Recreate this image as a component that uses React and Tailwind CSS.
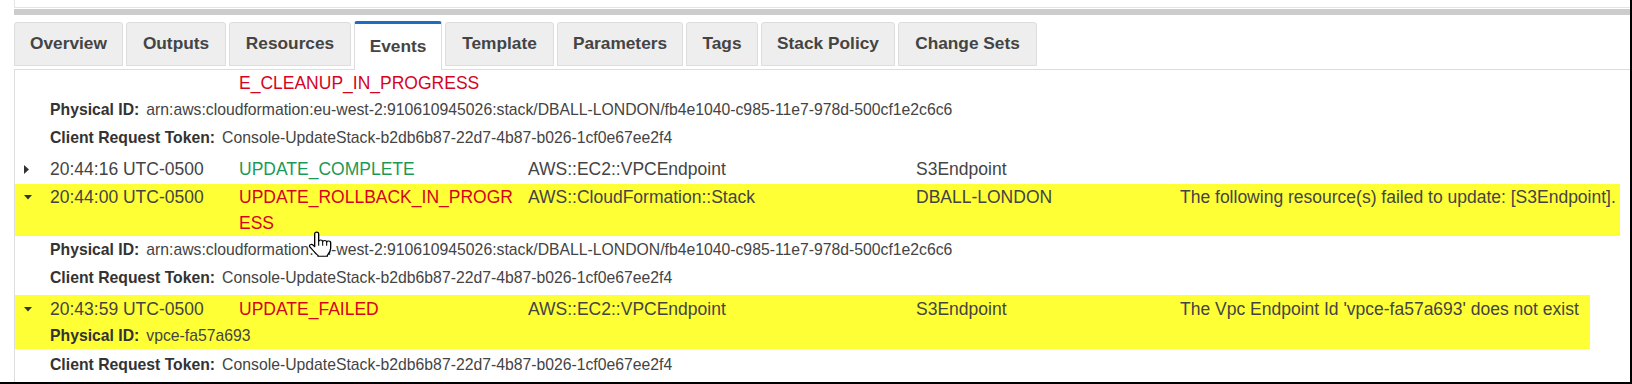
import React from "react";

const tabs = [
  ["Overview", "w-[109px]"],
  ["Outputs", "w-[100px]"],
  ["Resources", "w-[122px]"],
  ["Events", "w-[88px]"],
  ["Template", "w-[109px]"],
  ["Parameters", "w-[126px]"],
  ["Tags", "w-[72px]"],
  ["Stack Policy", "w-[134px]"],
  ["Change Sets", "w-[139px]"],
];

function RightTri() {
  return (
    <svg width="5" height="9" viewBox="0 0 5 9" className="block">
      <polygon points="0,0 5,4.5 0,9" fill="#333" />
    </svg>
  );
}

function DownTri() {
  return (
    <svg width="8" height="5" viewBox="0 0 8 5" className="block">
      <polygon points="0,0 8,0 4,4.5" fill="#333" />
    </svg>
  );
}

function Hand() {
  return (
    <svg width="24" height="26" viewBox="0 0 18 24" preserveAspectRatio="none" className="block">
      <path
        d="M6.5 1 C7.4 1 8 1.6 8 2.5 V9.5 C8.2 8.7 8.8 8.3 9.5 8.3 C10.3 8.3 10.9 8.9 11 9.8 C11.2 9.1 11.8 8.7 12.5 8.7 C13.3 8.7 13.9 9.3 14 10.2 C14.2 9.6 14.8 9.2 15.4 9.2 C16.3 9.2 17 9.9 17 10.8 V16 C17 19 15.5 21 14.5 22.5 V23.3 H7.5 V22.5 C6.5 21.5 5 19.5 3.5 17.5 L1.4 14.6 C0.9 13.9 1.1 13 1.8 12.6 C2.5 12.2 3.3 12.4 3.8 13 L5 14.5 V2.5 C5 1.6 5.6 1 6.5 1 Z"
        fill="#fff"
        stroke="#000"
        strokeWidth="1"
        strokeLinejoin="round"
      />
      <path d="M8 9.5 V13.5 M11 9.8 V13.5 M14 10.2 V13.5" stroke="#000" strokeWidth="0.8" fill="none" />
    </svg>
  );
}

function Detail({ label, value, className = "" }) {
  return (
    <div className={"pl-[35px] text-[15.75px] whitespace-nowrap text-[#444] " + className}>
      <span className="font-bold text-[#333] mr-[7px]">{label}</span>
      <span>{value}</span>
    </div>
  );
}

function MainRow({ arrow, time, status, statusColor, type, logical, reason }) {
  return (
    <div className="flex text-[17.5px] leading-[26px] whitespace-nowrap text-[#444]">
      <div className="w-[35px] h-[26px] flex items-center pl-[9px]">
        {arrow === "right" ? <RightTri /> : arrow === "down" ? <DownTri /> : null}
      </div>
      <div className="w-[189px]">{time}</div>
      <div className={"w-[289px] " + statusColor}>{status}</div>
      <div className="w-[388px]">{type}</div>
      <div className="w-[264px]">{logical}</div>
      <div className="flex-1">{reason}</div>
    </div>
  );
}

const ARN =
  "arn:aws:cloudformation:eu-west-2:910610945026:stack/DBALL-LONDON/fb4e1040-c985-11e7-978d-500cf1e2c6c6";
const TOKEN = "Console-UpdateStack-b2db6b87-22d7-4b87-b026-1cf0e67ee2f4";

export default function App() {
  return (
    <div className="w-[1632px] h-[384px] overflow-hidden bg-white border-r-2 border-b-2 border-black font-['Liberation_Sans',Arial,sans-serif] text-[#444]">
      <div className="pl-[14px]">
        <div className="h-[8px] border-l border-b border-[#e4e4e4]" />
        <div className="h-[6px] mt-[1px] bg-[#cccccc]" />
        <div className="mt-[6px] h-[49px] border-b border-[#dddddd] flex items-end gap-[3px]">
          {tabs.map(([name, w]) =>
            name === "Events" ? (
              <div
                key={name}
                className={
                  w +
                  " h-[49px] -mb-[1px] relative z-10 bg-white border-x border-[#dddddd] border-t-[3px] border-t-[#1f6cc0] rounded-t-[3px] flex items-center justify-center text-[17.3px] font-bold text-[#444]"
                }
              >
                {name}
              </div>
            ) : (
              <div
                key={name}
                className={
                  w +
                  " h-[44px] mb-[3px] bg-[#eeeeee] border border-[#dddddd] rounded-t-[3px] flex items-center justify-center text-[17.3px] font-bold text-[#444]"
                }
              >
                {name}
              </div>
            )
          )}
        </div>
        <div className="relative border-l border-[#dddddd] h-[313px]">
          <div className="h-[26px]">
            <MainRow status="E_CLEANUP_IN_PROGRESS" statusColor="text-[#d5041f]" />
          </div>
          <Detail label="Physical ID:" value={ARN} className="leading-[28px]" />
          <Detail label="Client Request Token:" value={TOKEN} className="leading-[28px]" />
          <div className="h-[34px] pt-[4px]">
            <MainRow
              arrow="right"
              time="20:44:16 UTC-0500"
              status="UPDATE_COMPLETE"
              statusColor="text-[#1c9a55]"
              type="AWS::EC2::VPCEndpoint"
              logical="S3Endpoint"
            />
          </div>
          <div className="w-[1605px] h-[52px] bg-[#ffff36]">
            <div className="-mt-[2px]">
              <MainRow
                arrow="down"
                time="20:44:00 UTC-0500"
                status={
                  <>
                    UPDATE_ROLLBACK_IN_PROGR
                    <br />
                    ESS
                  </>
                }
                statusColor="text-[#d5041f]"
                type="AWS::CloudFormation::Stack"
                logical="DBALL-LONDON"
                reason="The following resource(s) failed to update: [S3Endpoint]."
              />
            </div>
          </div>
          <Detail label="Physical ID:" value={ARN} className="leading-[28px]" />
          <Detail label="Client Request Token:" value={TOKEN} className="leading-[28px]" />
          <div className="mt-[3px] w-[1575px] h-[54px] bg-[#ffff36] pt-[1px]">
            <MainRow
              arrow="down"
              time="20:43:59 UTC-0500"
              status="UPDATE_FAILED"
              statusColor="text-[#d5041f]"
              type="AWS::EC2::VPCEndpoint"
              logical="S3Endpoint"
              reason="The Vpc Endpoint Id 'vpce-fa57a693' does not exist"
            />
            <Detail label="Physical ID:" value="vpce-fa57a693" className="leading-[27px]" />
          </div>
          <Detail label="Client Request Token:" value={TOKEN} className="mt-[2px] leading-[28px]" />
          <div className="absolute left-[293px] top-[161px] pointer-events-none">
            <Hand />
          </div>
        </div>
      </div>
    </div>
  );
}
